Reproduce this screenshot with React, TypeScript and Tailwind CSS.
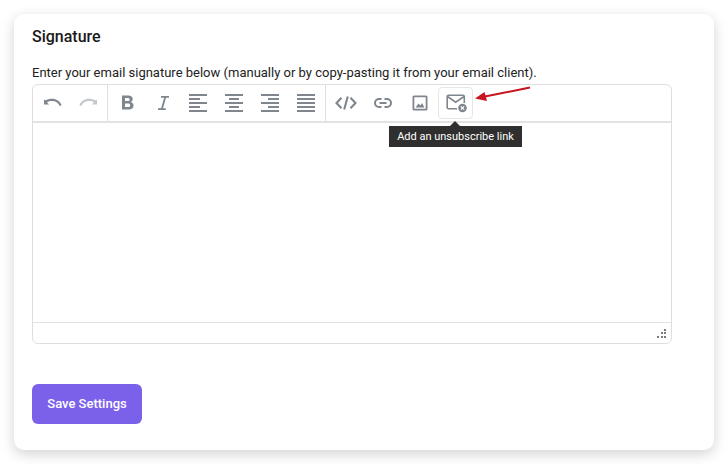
import React from "react";

const G = "#7f868d";

function Ico({ children, faded }: { children: React.ReactNode; faded?: boolean }) {
  return (
    <svg width="24" height="24" viewBox="0 0 24 24" fill={faded ? "#c4c8cc" : G}>
      {children}
    </svg>
  );
}

function Btn({ children, active }: { children: React.ReactNode; active?: boolean }) {
  return (
    <div
      className={
        "h-[32px] flex items-center justify-center rounded-[4px] box-border " +
        (active ? "w-[35px] -ml-[1px] border border-[#e6e6e6]" : "w-9")
      }
    >
      {children}
    </div>
  );
}

function Sep() {
  return <div className="w-px self-stretch bg-[#e0e0e0]" />;
}

function Lines({ rows }: { rows: [number, number][] }) {
  return (
    <Ico>
      {rows.map(([x, w], i) => (
        <rect key={i} x={x} y={3 + i * 4} width={w} height="2" />
      ))}
    </Ico>
  );
}

export default function App() {
  return (
    <div className="w-[728px] h-[464px] bg-white p-[14px] box-border font-['Roboto',sans-serif] overflow-hidden">
      <div className="w-[700px] h-[436px] bg-white rounded-[10px] shadow-[0_4px_14px_rgba(0,0,0,0.18)] pl-[18px] pr-[42px] pt-[13px] box-border flex flex-col">
        <h2 className="text-[16px] leading-[20px] font-medium text-[#1a1a1a]">Signature</h2>
        <p className="mt-[17px] text-[13px] leading-[18px] text-[#222]">
          Enter your email signature below (manually or by copy-pasting it from your email client).
        </p>
        <div className="relative mt-[2px] h-[260px] border border-[#dedede] rounded-[6px] flex flex-col box-border">
          <div className="h-[38px] border-b-2 border-[#e2e2e2] flex items-stretch box-border shrink-0">
            <div className="flex items-center pl-[2px] pr-[1px]">
              <Btn>
                <Ico>
                  <path d="M6.400 8.200 3 11.600V6.400l1.400 1.200C6.200 6.400 8.600 5.800 11 5.800c4.400 0 8 2.400 9.600 6.400l-2 .8C17.500 9.800 14.400 8 11 8c-2 0-3.700.4-5 1.200L8 11.600H3v-5z" transform="translate(0 2)" />
                </Ico>
              </Btn>
              <div className="-ml-[1px]">
                <Btn>
                  <Ico faded>
                    <path d="M17.600 8.200 21 11.600V6.400l-1.400 1.200C17.800 6.400 15.400 5.800 13 5.800c-4.400 0-8 2.400-9.600 6.400l2 .8C6.500 9.800 9.600 8 13 8c2 0 3.700.4 5 1.200L16 11.600h5v-5z" transform="translate(0 2)" />
                  </Ico>
                </Btn>
              </div>
            </div>
            <Sep />
            <div className="flex items-center pl-[1px] pr-[1px]">
              <Btn>
                <Ico>
                  <path fillRule="evenodd" d="M7 4.500h6.400c2.700 0 4.300 1.400 4.300 3.600 0 1.400-.8 2.600-2 3 1.700.4 2.800 1.700 2.800 3.400 0 2.500-1.800 4-4.600 4H7V4.500zm3 2.400v3.200h2.900c1.100 0 1.800-.6 1.800-1.600s-.7-1.600-1.800-1.600H10zm0 5.500v3.700h3.100c1.300 0 2.100-.7 2.100-1.900s-.8-1.800-2.100-1.800H10z" />
                </Ico>
              </Btn>
              <div className="-mr-[1px]">
                <Btn>
                  <Ico>
                    <path d="M10 5h8v1.800h-3l-3 10.400h2.800V19H7v-1.800h3.100l3-10.400H10z" />
                  </Ico>
                </Btn>
              </div>
              <Btn>
                <Lines rows={[[3, 18], [3, 11], [3, 18], [3, 11], [3, 18]]} />
              </Btn>
              <Btn>
                <Lines rows={[[3, 18], [7, 10], [3, 18], [7, 10], [3, 18]]} />
              </Btn>
              <Btn>
                <Lines rows={[[3, 18], [10, 11], [3, 18], [10, 11], [3, 18]]} />
              </Btn>
              <Btn>
                <Lines rows={[[3, 18], [3, 18], [3, 18], [3, 18], [3, 18]]} />
              </Btn>
            </div>
            <Sep />
            <div className="flex items-center pl-[2px] gap-[1px]">
              <Btn>
                <svg width="24" height="24" viewBox="0 0 24 24" fill="none" stroke={G} strokeWidth="2.100">
                  <path d="M7.500 6.800 2.500 12l5 5.200M16.500 6.800l5 5.200-5 5.200M13.800 5.500l-3.600 13" />
                </svg>
              </Btn>
              <Btn>
                <svg width="24" height="24" viewBox="0 0 24 24" fill="none" stroke={G} strokeWidth="2">
                  <path d="M10.500 8H8a4 4 0 0 0 0 8h2.500M13.500 8H16a4 4 0 0 1 0 8h-2.500M8.500 12h7" />
                </svg>
              </Btn>
              <Btn>
                <Ico>
                  <path fillRule="evenodd" d="M6 4.500h12A1.500 1.500 0 0 1 19.500 6v12a1.500 1.500 0 0 1-1.500 1.500H6A1.500 1.500 0 0 1 4.500 18V6A1.500 1.500 0 0 1 6 4.500zm.3 1.800v11.400h11.400V6.300z" />
                  <path d="M7.500 16.500l3-4 1.800 2 1.700-2.500 2.500 4.500z" />
                </Ico>
              </Btn>
              <Btn active>
                <svg width="24" height="24" viewBox="0 0 24 24">
                  <path d="M13 17.700H4.500a1.300 1.300 0 0 1-1.300-1.300V5.500a1.300 1.300 0 0 1 1.300-1.300h14.500a1.300 1.300 0 0 1 1.300 1.300V12M3.500 5.500l8.200 5.700 8.300-5.700" fill="none" stroke={G} strokeWidth="1.600" />
                  <circle cx="18.500" cy="17" r="4.300" fill={G} />
                  <path d="M16.900 15.400l3.200 3.200m0-3.200-3.200 3.200" stroke="#fff" strokeWidth="1.200" />
                </svg>
              </Btn>
            </div>
          </div>
          <div className="flex-1 bg-white" />
          <div className="relative h-[21px] border-t border-[#e2e2e2] box-border shrink-0">
            <svg className="absolute right-[4px] bottom-[3px]" width="11" height="11" viewBox="0 0 11 11" fill="#7a7a7a">
              <rect x="8" y="0" width="2" height="2" />
              <rect x="5" y="3" width="2" height="2" />
              <rect x="8" y="3" width="2" height="2" />
              <rect x="1" y="7" width="2" height="2" />
              <rect x="5" y="7" width="2" height="2" />
              <rect x="8" y="7" width="2" height="2" />
            </svg>
          </div>

          <div className="absolute left-[356px] top-[36px] flex flex-col items-start">
            <div className="ml-[61px] w-0 h-0 border-l-[5px] border-r-[5px] border-b-[5px] border-l-transparent border-r-transparent border-b-[#2f2f2f]" />
            <div className="h-[21px] w-[133px] bg-[#2f2f2f] text-white text-[11px] leading-[21px] text-center">
              Add an unsubscribe link
            </div>
          </div>
          <svg className="absolute left-[438px] top-[0px]" width="64" height="22" viewBox="0 0 64 22">
            <path d="M59 2.500 14 11.500" stroke="#c8141e" strokeWidth="2" fill="none" />
            <path d="M4 13.500 13.500 7l2.500 9z" fill="#c8141e" />
          </svg>
        </div>
        <button className="mt-[40px] w-[110px] h-[40px] rounded-[6px] bg-[#7b61ea] text-white text-[13px] font-medium text-center">
          Save Settings
        </button>
      </div>
    </div>
  );
}
